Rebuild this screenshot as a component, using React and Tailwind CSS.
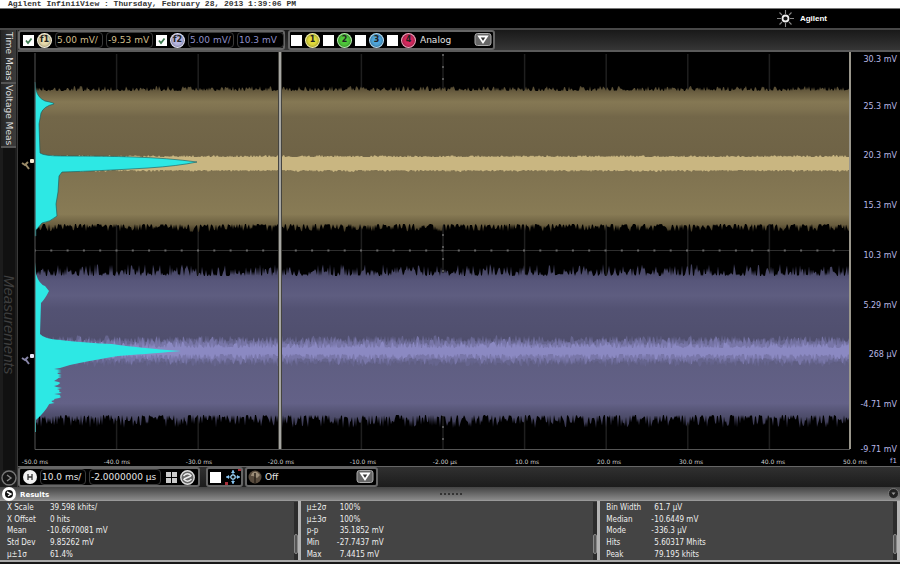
import { useMemo } from 'react';

const UI_FONT = "font-['DejaVu_Sans',sans-serif]";
const NARROW_FONT = "font-['DejaVu_Sans_Condensed','DejaVu_Sans',sans-serif]";

const Y_TICKS = ['25.3 mV', '20.3 mV', '15.3 mV', '10.3 mV', '5.29 mV', '268 µV', '-4.71 mV'];
const X_TICKS = ['-50.0 ms', '-40.0 ms', '-30.0 ms', '-20.0 ms', '-10.0 ms', '-2.00 µs', '10.0 ms', '20.0 ms', '30.0 ms', '40.0 ms', '50.0 ms'];

const RESULTS = [
  [['X Scale', '39.598 khits/'], ['X Offset', '0 hits'], ['Mean', '-10.6670081 mV'], ['Std Dev', '9.85262 mV'], ['µ±1σ', '61.4%']],
  [['µ±2σ', '100%'], ['µ±3σ', '100%'], ['p-p', '35.1852 mV'], ['Min', '-27.7437 mV'], ['Max', '7.4415 mV']],
  [['Bin Width', '61.7 µV'], ['Median', '-10.6449 mV'], ['Mode', '-336.3 µV'], ['Hits', '5.60317 Mhits'], ['Peak', '79.195 khits']],
];

const CHANNELS = [
  { num: 1, color: 'bg-[#e2dc3c]' },
  { num: 2, color: 'bg-[#4fc93b]' },
  { num: 3, color: 'bg-[#4fa6dc]' },
  { num: 4, color: 'bg-[#d6295f]' },
];

function makeRandom(seed) {
  let s = seed;
  return () => {
    s = (s * 16807) % 2147483647;
    return s / 2147483647;
  };
}

// Ragged horizontal band between two levels
function band(seed, top, bottom, topNoise, bottomNoise) {
  const rand = makeRandom(seed);
  const upper = [];
  const lower = [];
  for (let x = 18; x <= 832; x += 1) {
    upper.push(`${x},${(top - Math.pow(rand(), 2) * topNoise).toFixed(1)}`);
    lower.push(`${x},${(bottom + Math.pow(rand(), 2) * bottomNoise).toFixed(1)}`);
  }
  return `M${upper.join('L')}L${lower.reverse().join('L')}Z`;
}

// Lower purple histogram edge, bins jitter from row to row
function raggedEdge() {
  const rand = makeRandom(911);
  let d = '';
  for (let y = 317; y < 353; y += 1) {
    d += `L${(36 + rand() * 9 - (y > 342 ? (y - 342) / 2 : 0)).toFixed(1)},${y}`;
  }
  return d;
}

function Plot() {
  const p = useMemo(
    () => ({
      yOuter: band(17, 39, 172, 5, 8),
      yInner: band(91, 105, 118, 2, 2),
      pOuter: band(333, 224, 363, 12, 13),
      pHaze: band(61, 290, 309, 7, 6),
      pGlow: band(77, 293, 306, 9, 7),
      pCore: band(505, 296, 302, 7, 6),
    }),
    []
  );
  const edge = useMemo(raggedEdge, []);
  return (
    <svg className="block h-full w-full" viewBox="0 0 833 398" preserveAspectRatio="none" role="img" aria-label="Waveform display">
      <defs>
        <linearGradient id="sand" gradientUnits="userSpaceOnUse" x1="0" y1="32" x2="0" y2="180">
          <stop offset="0" stopColor="#4a412b" />
          <stop offset="0.06" stopColor="#6c6042" />
          <stop offset="0.12" stopColor="#857854" />
          <stop offset="0.17" stopColor="#7f7250" />
          <stop offset="0.22" stopColor="#736749" />
          <stop offset="0.48" stopColor="#6f6346" />
          <stop offset="0.58" stopColor="#7f7250" />
          <stop offset="0.88" stopColor="#887b55" />
          <stop offset="0.95" stopColor="#6b5f40" />
          <stop offset="1" stopColor="#3a3220" />
        </linearGradient>
        <linearGradient id="violet" gradientUnits="userSpaceOnUse" x1="0" y1="212" x2="0" y2="378">
          <stop offset="0" stopColor="#3e3d58" />
          <stop offset="0.1" stopColor="#57567a" />
          <stop offset="0.19" stopColor="#5e5d80" />
          <stop offset="0.27" stopColor="#535273" />
          <stop offset="0.45" stopColor="#504f6e" />
          <stop offset="0.6" stopColor="#5f5e82" />
          <stop offset="0.84" stopColor="#636187" />
          <stop offset="0.92" stopColor="#4d4c6a" />
          <stop offset="1" stopColor="#2c2b40" />
        </linearGradient>
      </defs>

      <g stroke="#1f1f1f" strokeWidth="1.5">
        {[1, 2, 3, 4, 5, 6, 7, 8, 9].map((i) => (
          <line key={i} x1={17 + i * 81.6} y1="2" x2={17 + i * 81.6} y2="397" />
        ))}
      </g>
      <line x1="17" y1="198.5" x2="832" y2="198.5" stroke="#2e2e2e" />
      <line x1="17" y1="198.5" x2="832" y2="198.5" stroke="#666" strokeWidth="2" strokeDasharray="2 14.3" strokeDashoffset="1" />
      <line x1="425" y1="2" x2="425" y2="397" stroke="#555" strokeWidth="2" strokeDasharray="2 10" />

      <path d={p.yOuter} fill="url(#sand)" />
      <path d={p.yInner} fill="#c9b681" />
      <path d={p.pOuter} fill="url(#violet)" />
      <path d={p.pHaze} fill="#66658e" />
      <path d={p.pGlow} fill="#7876a8" />
      <path d={p.pCore} fill="#8b89c2" />

      <path
        d="M17 30L18 38Q20 46 27 49Q37 51 36 52Q26 54 23 61L21 72L22 101Q26 104 44 104Q90 104 115 105Q150 106 179 110Q160 114 130 116Q80 119 44 120L41 124L40 140L38 152L39 164Q32 170 24 171L18 178V184H17Z"
        fill="#2de8e4"
        stroke="#14585a"
        strokeWidth="0.6"
      />
      <path
        d={`M17 210L18 222Q21 232 27 234L31 239Q27 247 23 251L22 282Q26 287 42 288Q70 291 94 292Q120 296 163 299Q140 301 100 304Q70 309 52 313L42 316${edge}Q27 360 18 368V380H17Z`}
        fill="#2de8e4"
      />

      <path d="M17 1V397.5H832" fill="none" stroke="#555" />
      <line x1="832" y1="0" x2="832" y2="397" stroke="#9a978c" strokeWidth="2" />
      <line x1="262" y1="0" x2="262" y2="397" stroke="#45443f" strokeWidth="4" />
      <line x1="262" y1="0" x2="262" y2="397" stroke="#a6a6a2" strokeWidth="2" />

      {/* ground markers */}
      <g fill="none" strokeWidth="2">
        <path d="M4 111L7 113L10 110M8 113L11 117" stroke="#9b8b68" />
        <path d="M4 306L7 308L10 305M8 308L11 312" stroke="#8886a8" />
      </g>
      <rect x="12" y="107" width="4" height="4" rx="1" fill="#f0e7cf" />
      <rect x="12" y="302" width="4" height="4" rx="1" fill="#e8e8f8" />
    </svg>
  );
}

function Tick({ label, checked }) {
  return (
    <label className="relative block size-[11px] shrink-0">
      <input type="checkbox" defaultChecked={checked} aria-label={label} className="peer block size-[11px] appearance-none bg-white" />
      <svg className="pointer-events-none absolute inset-0 hidden size-[11px] peer-checked:block" viewBox="0 0 11 11">
        <path d="M3 5.5L5 8L8.5 3.5" fill="none" stroke="#3d7a50" strokeWidth="1.8" />
      </svg>
    </label>
  );
}

function Field({ label, value, width, color }) {
  return (
    <input
      type="text"
      aria-label={label}
      defaultValue={value}
      className={`h-4 shrink-0 rounded-sm border border-[#3a3a3a] bg-black px-px text-[9px] leading-3 ${width} ${color}`}
    />
  );
}

function Badge({ children, color }) {
  return (
    <span className={`flex size-[15px] shrink-0 items-center justify-center rounded-full border border-white/60 text-[8px] font-bold leading-none text-[#222] shadow-[inset_0_0_3px_rgba(0,0,0,0.5)] ${color}`}>
      {children}
    </span>
  );
}

function Dropdown({ label, value, options, width }) {
  return (
    <label className={`relative block shrink-0 ${width}`}>
      <select aria-label={label} defaultValue={value} className="block h-4 w-full appearance-none rounded-sm bg-black pl-px text-[9px] leading-3 text-[#e4e4e4]">
        {options.map((o) => (
          <option key={o}>{o}</option>
        ))}
      </select>
      <svg className="pointer-events-none absolute top-px right-0 h-[13px] w-[18px]" viewBox="0 0 18 13">
        <rect x="1" y="0.5" width="16" height="12" rx="2.5" fill="#666" stroke="#aaa" />
        <path d="M5 3.5H13L9 9.5Z" fill="#333" stroke="#fff" strokeWidth="1.8" />
      </svg>
    </label>
  );
}

const GROUP = 'flex h-5 items-center rounded-[3px] border-2 border-[#666] bg-black';

function TopToolbar() {
  return (
    <div className="flex h-[22px] shrink-0 items-center gap-[3px] border-b-2 border-[#5a5a5a] bg-linear-to-b from-[#191919] to-[#363636]">
      <div className={`${GROUP} w-[267px] gap-[3px] pl-[3px]`}>
        <Tick label="Function 1" checked />
        <Badge color="bg-[#e8dcae]">f1</Badge>
        <Field label="Function 1 scale" value="5.00 mV/" width="w-[48px]" color="text-[#cfbd8b]" />
        <Field label="Function 1 offset" value="-9.53 mV" width="w-[47px]" color="text-[#cfbd8b]" />
        <Tick label="Function 2" checked />
        <Badge color="bg-[#b9b8e2]">f2</Badge>
        <Field label="Function 2 scale" value="5.00 mV/" width="w-[46px]" color="text-[#8f8fc9]" />
        <Field label="Function 2 offset" value="10.3 mV" width="w-[47px]" color="text-[#8f8fc9]" />
      </div>
      <div className={`${GROUP} gap-[3px] px-px`}>
        {CHANNELS.map((c) => (
          <div key={c.num} className="flex w-[29px] items-center gap-[3px]">
            <Tick label={`Channel ${c.num}`} />
            <Badge color={c.color}>{c.num}</Badge>
          </div>
        ))}
        <Dropdown label="Channel type" value="Analog" options={['Analog', 'Digital']} width="w-[73px]" />
      </div>
    </div>
  );
}

function BottomToolbar() {
  return (
    <div className="flex h-[21px] shrink-0 items-center border-t border-[#666] bg-linear-to-b from-[#303030] to-[#1c1c1c]">
      <div className={`${GROUP} w-[182px] gap-[3px] pl-[3px]`}>
        <button type="button" aria-label="Horizontal">
          <svg className="size-[14px]" viewBox="0 0 14 14">
            <circle cx="7" cy="7" r="7" fill="#f0f0f0" />
            <path d="M5 4V10M9 4V10M5 7H9" stroke="#333" strokeWidth="1.3" fill="none" />
          </svg>
        </button>
        <Field label="Time scale" value="10.0 ms/" width="w-[46px]" color="text-[#e4e4e4]" />
        <Field label="Time position" value="-2.0000000 µs" width="w-[72px]" color="text-[#e4e4e4]" />
        <button type="button" aria-label="Grid" className="ml-0.5">
          <svg className="size-[11px]" viewBox="0 0 11 11">
            <path d="M0 0H5V5H0ZM6 0H11V5H6ZM0 6H5V11H0ZM6 6H11V11H6Z" fill="#ccc" />
          </svg>
        </button>
        <button type="button" aria-label="Zoom">
          <svg className="size-[15px]" viewBox="0 0 15 15">
            <circle cx="7.5" cy="7.5" r="6.7" fill="#666" stroke="#ddd" strokeWidth="1.4" />
            <path d="M3.5 6Q7.5 1.5 11.5 6M3.5 9Q7.5 13.5 11.5 9M4 9L11 6" stroke="#eee" strokeWidth="1.4" fill="none" />
          </svg>
        </button>
      </div>
      <div className={`${GROUP} ml-1.5 w-[37px] gap-1 pl-0.5`}>
        <Tick label="Markers" />
        <button type="button" aria-label="Marker crosshair">
          <svg className="size-[16px]" viewBox="0 0 16 16">
            <path d="M8 1V15M1 8H15" stroke="#3c6f9c" strokeWidth="1.6" />
            <path d="M8 1L10 4H6ZM8 15L10 12H6ZM1 8L4 6V10ZM15 8L12 6V10Z" fill="#8dc6ee" />
            <circle cx="8" cy="8" r="2.2" fill="#111" stroke="#9ed0ee" strokeWidth="1.2" />
            <rect x="13" y="0" width="3" height="2" fill="#a9303a" />
            <rect x="0" y="13" width="3" height="3" fill="#a9303a" />
          </svg>
        </button>
      </div>
      <div className={`${GROUP} ml-0.5 w-[133px] gap-0.5 pl-px`}>
        <svg className="size-[14px] shrink-0" viewBox="0 0 14 14">
          <circle cx="7" cy="7" r="6.5" fill="#584b3d" />
          <path d="M3 6Q4 1 9 2L12 5L9 8L5 6Z" fill="#9c8d78" />
          <path d="M7 3V13" stroke="#282018" strokeWidth="1.5" />
        </svg>
        <Dropdown label="Trigger action" value="Off" options={['Off', 'On']} width="w-[110px]" />
      </div>
    </div>
  );
}

function Sidebar() {
  const tab = 'w-[15px] border-b-2 border-[#555] bg-linear-to-r from-[#262626] to-[#3c3c3c] text-[9px] leading-[14px] text-[#ddd] [writing-mode:vertical-rl]';
  return (
    <div className="flex w-[18px] shrink-0 flex-col items-center border-r border-[#3a3a3a] bg-[#1c1c1c]">
      <button type="button" className={`${tab} h-[54px]`}>Time Meas</button>
      <button type="button" className={`${tab} h-[64px]`}>Voltage Meas</button>
      <div className="flex w-3 flex-1 items-center justify-center bg-[#111]">
        <span className="mt-8 font-['Liberation_Sans',sans-serif] text-[15px] leading-3 text-[#3e3e3e] italic [writing-mode:vertical-rl]">Measurements</span>
      </div>
      <button type="button" aria-label="Expand" className="mb-px">
        <svg className="size-[16px]" viewBox="0 0 16 16">
          <circle cx="8" cy="8" r="7" fill="#151515" stroke="#777" strokeWidth="1.4" />
          <path d="M6 5L10 8L6 11" fill="none" stroke="#888" strokeWidth="1.4" />
        </svg>
      </button>
    </div>
  );
}

function Results() {
  return (
    <section className="shrink-0 bg-[#444]">
      <header className="flex h-[14px] items-center justify-between border-b border-[#999] bg-linear-to-b from-[#444] to-[#8a8a8a] pr-px pl-0.5">
        <div className="flex flex-1 items-center gap-1">
          <svg className="size-[14px]" viewBox="0 0 14 14">
            <circle cx="7" cy="7" r="7" fill="#fff" />
            <circle cx="7" cy="7" r="4" fill="#111" />
            <path d="M5 5L9 7L6 9" fill="none" stroke="#fff" strokeWidth="1.4" />
          </svg>
          <h2 className="pt-0.5 text-[7px] leading-3 font-bold text-white">Results</h2>
        </div>
        <div className="flex gap-0.5">
          {[0, 1, 2, 3, 4, 5].map((i) => (
            <span key={i} className="size-0.5 bg-[#333]" />
          ))}
        </div>
        <div className="flex flex-1 justify-end">
          <button type="button" aria-label="Collapse results">
            <svg className="block size-[11px]" viewBox="0 0 11 11">
              <circle cx="5.5" cy="5.5" r="5" fill="#222" stroke="#888" strokeWidth="0.8" />
              <path d="M3.5 4.5L5.5 7L7.5 4.5Z" fill="#999" />
            </svg>
          </button>
        </div>
      </header>
      <div className="grid grid-cols-3 border-b-2 border-[#aaa] pl-px">
        {RESULTS.map((rows, i) => (
          <div key={i} className="flex items-end justify-between border-r-3 border-[#b4b4b4] pt-px pl-1.5">
            <table className={`h-[58px] text-[8px] leading-[11px] text-[#eee] ${NARROW_FONT}`}>
              <tbody>
                {rows.map(([name, value]) => (
                  <tr key={name}>
                    <th scope="row" className={`p-0 text-left font-normal ${i === 2 ? 'w-[45px]' : i === 1 ? 'w-[30px]' : 'w-[40px]'}`}>{name}</th>
                    <td className="p-0">
                      {/* reserve the sign column so digits line up */}
                      <span className="inline-block w-[3px]">{value.startsWith('-') ? '-' : ''}</span>
                      {value.replace('-', '')}
                    </td>
                  </tr>
                ))}
              </tbody>
            </table>
            <div className="flex h-full w-1 items-end bg-[#2c2c2c] pb-1.5">
              <span className="h-5 w-1 rounded-sm border border-[#888] bg-[#555]" />
            </div>
          </div>
        ))}
      </div>
    </section>
  );
}

export default function App() {
  return (
    <div className={`flex h-screen min-h-[420px] flex-col overflow-hidden bg-black ${UI_FONT}`}>
      <div className="shrink-0 bg-white pl-2 font-['Liberation_Mono',monospace] text-[8px] leading-2 font-bold whitespace-pre text-[#333]">
        Agilent InfiniiView : Thursday, February 28, 2013 1:39:06 PM
      </div>
      <div className="flex h-[22px] shrink-0 items-center justify-end gap-1.5 border-t border-b-2 border-t-[#777] border-b-[#484848] pr-[73px]">
        <svg className="size-[17px]" viewBox="0 0 17 17">
          <g stroke="#888" strokeWidth="1.1">
            <path d="M8.5 0V4M8.5 13V17M0 8.5H4M13 8.5H17M2.5 2.5L5 5M12 12L14.5 14.5M2.5 14.5L5 12M12 5L14.5 2.5" />
          </g>
          <circle cx="8.5" cy="8.5" r="3" fill="#111" stroke="#eee" strokeWidth="1.8" />
        </svg>
        <span className="font-['Liberation_Sans',sans-serif] text-[8px] leading-3 font-bold text-white">Agilent</span>
      </div>

      <div className="flex min-h-0 flex-1">
        <Sidebar />
        <div className="flex min-w-0 flex-1 flex-col">
          <TopToolbar />
          <div className="flex min-h-0 flex-1">
            <div className="flex min-w-0 flex-1 flex-col">
              <div className="min-h-0 flex-1">
                <Plot />
              </div>
              <div className="-mr-5 flex h-4 shrink-0 items-end justify-between pl-px text-[6px] leading-2 text-[#ccc]">
                {X_TICKS.map((t) => (
                  <span key={t} className="w-8 text-center whitespace-nowrap">{t}</span>
                ))}
              </div>
            </div>
            <div className="flex w-[49px] shrink-0 flex-col pr-[3px] text-right text-[8px] leading-3 whitespace-nowrap text-[#b9b8e6]">
              <div className="flex flex-[28] items-start justify-end pt-0.5">30.3 mV</div>
              {Y_TICKS.map((t) => (
                <div key={t} className="flex flex-[50] items-center justify-end">{t}</div>
              ))}
              <div className="flex flex-[26] items-end justify-end">-9.71 mV</div>
              <div className="text-[7px] leading-[10px]">f1</div>
            </div>
          </div>
          <BottomToolbar />
        </div>
      </div>
      <Results />
      <div className="h-0.5 shrink-0 bg-[#181818]" />
    </div>
  );
}
